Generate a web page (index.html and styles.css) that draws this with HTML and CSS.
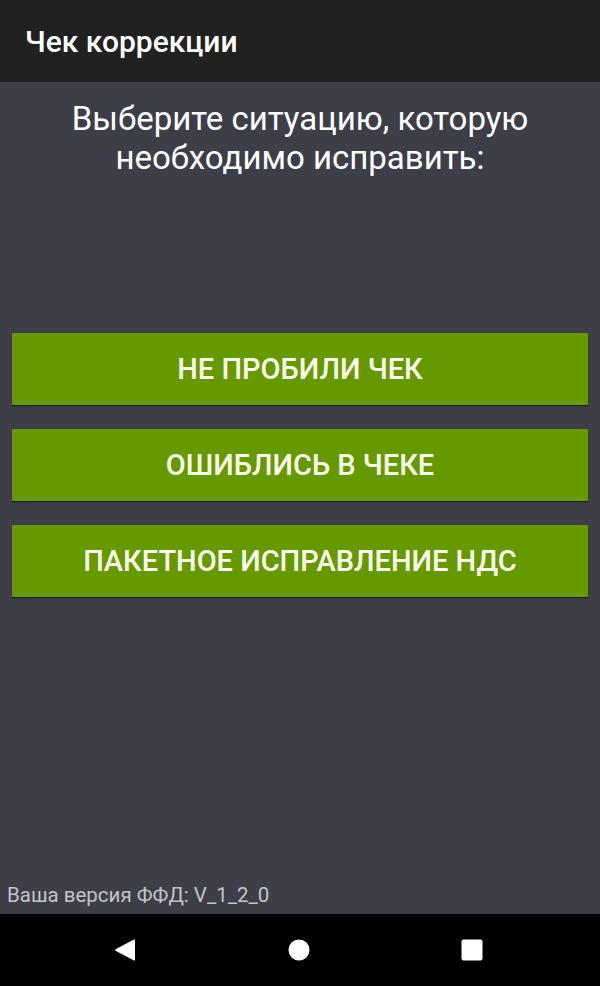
FILE: index.html
```html
<!DOCTYPE html>
<html lang="ru">
<head>
<meta charset="utf-8">
<title>Чек коррекции</title>
<link rel="stylesheet" href="styles.css">
</head>
<body>
<div class="screen">
  <header class="appbar">Чек коррекции</header>
  <main class="content">
    <h1 class="prompt">Выберите ситуацию, которую<br>необходимо исправить:</h1>
    <div class="actions">
      <button class="action">НЕ ПРОБИЛИ ЧЕК</button>
      <button class="action">ОШИБЛИСЬ В ЧЕКЕ</button>
      <button class="action">ПАКЕТНОЕ ИСПРАВЛЕНИЕ НДС</button>
    </div>
    <div class="version">Ваша версия ФФД: V_1_2_0</div>
  </main>
  <nav class="navbar">
    <svg class="nav-icon" width="22" height="24" viewBox="0 0 22 24"><path d="M20 1.5 Q21 1 21 2.5 V21.5 Q21 23 20 22.5 L1.5 12.8 Q0.5 12 1.5 11.2 Z" fill="#fff"/></svg>
    <svg class="nav-icon" width="22" height="22" viewBox="0 0 22 22"><circle cx="11" cy="11" r="10.5" fill="#fff"/></svg>
    <svg class="nav-icon" width="22" height="22" viewBox="0 0 22 22"><rect x="0.5" y="0.5" width="21" height="21" rx="2" fill="#fff"/></svg>
  </nav>
</div>
</body>
</html>
```

FILE: styles.css
```css
html, body {
  margin: 0;
  padding: 0;
}
body {
  font-family: Roboto, "Noto Sans", "Liberation Sans", sans-serif;
  background: #000;
}
.screen {
  width: 600px;
  height: 986px;
  display: flex;
  flex-direction: column;
}
.appbar {
  height: 82px;
  flex: none;
  background: #212121;
  color: #fff;
  font-size: 30px;
  font-weight: 500;
  display: flex;
  align-items: center;
  padding-left: 25px;
  box-sizing: border-box;
}
.content {
  flex: 1;
  background: #3d3e48;
  display: flex;
  flex-direction: column;
  padding: 0 12px;
}
.prompt {
  margin: 17px 0 0;
  font-size: 33px;
  line-height: 39px;
  font-weight: 400;
  color: #fff;
  text-align: center;
}
.actions {
  margin-top: 156px;
  display: flex;
  flex-direction: column;
  gap: 24px;
}
.action {
  height: 72px;
  border: none;
  border-radius: 0;
  background: #669900;
  color: #fbfbec;
  font-family: Roboto, "Noto Sans", "Liberation Sans", sans-serif;
  font-size: 29px;
  font-weight: 500;
  box-shadow: 0 1px 1px rgba(0,0,0,0.45);
  padding: 0;
}
.version {
  margin-top: auto;
  margin-left: -5px;
  margin-bottom: 6px;
  font-size: 20.5px;
  line-height: 25px;
  color: #c4c4c8;
}
.navbar {
  height: 72px;
  flex: none;
  background: #000;
  display: flex;
  align-items: center;
  justify-content: space-between;
  padding: 0 117px 0 114px;
}
```
